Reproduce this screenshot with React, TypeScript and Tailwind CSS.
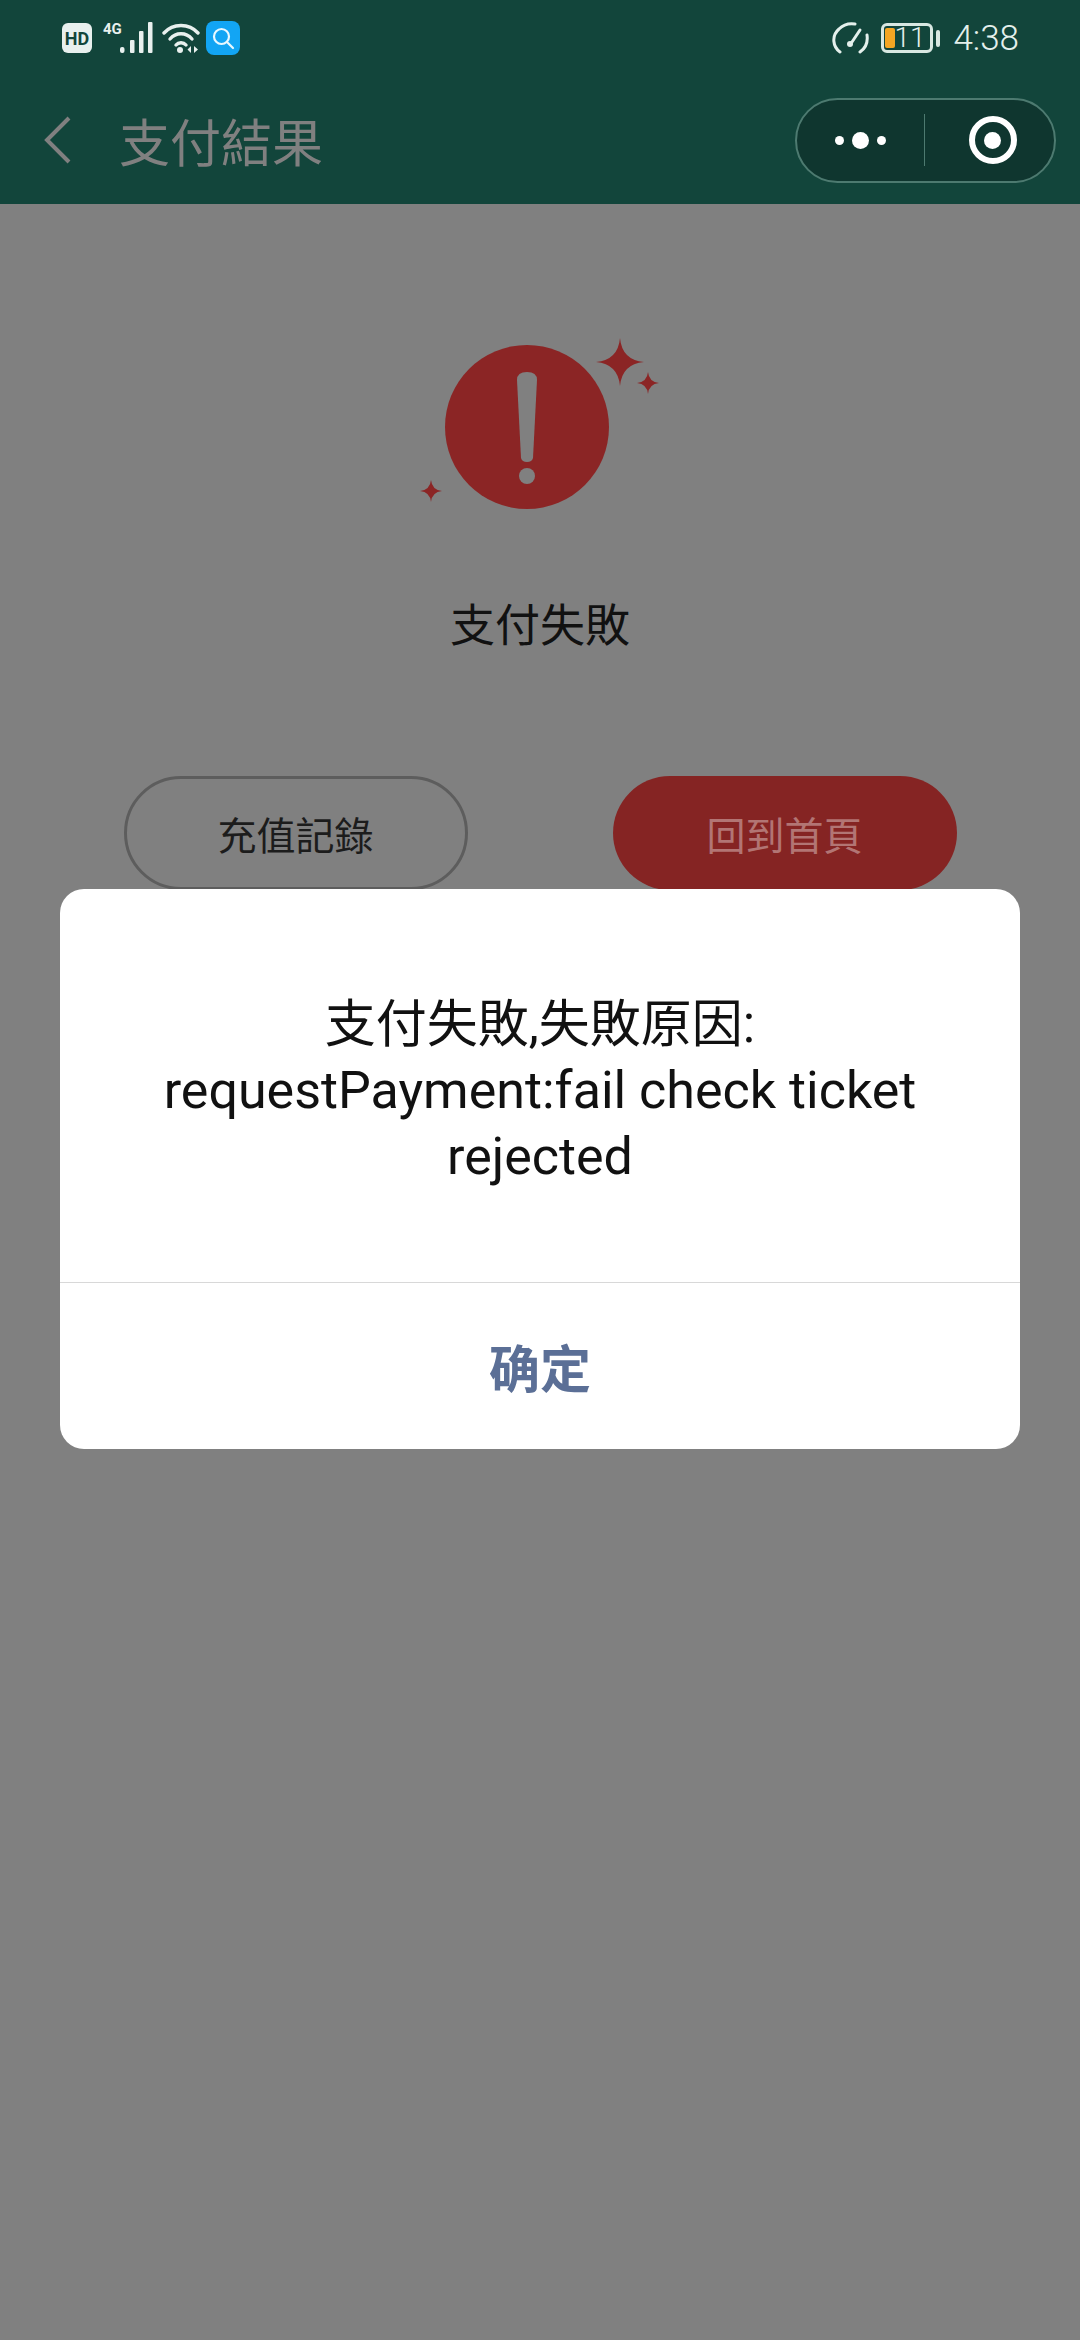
const cjk = "font-['Noto_Sans_CJK_TC','Noto_Sans_CJK_SC',sans-serif]";

function StatusLeft() {
  return (
    <div className="flex items-center">
      <div className="w-[30px] h-[30px] rounded-[6px] bg-[#e8f0ee] text-[#12453b] text-[18px] font-bold flex items-center justify-center font-['Roboto',sans-serif] ml-[62px]">
        HD
      </div>
      <svg width="52" height="34" viewBox="0 0 52 34" className="ml-[10px] text-[#e8f0ee]">
        <text x="1" y="13" fontSize="15" fontWeight="700" fill="currentColor" fontFamily="Roboto">4G</text>
        <rect x="18" y="26" width="4.500" height="6" rx="2" fill="currentColor" />
        <rect x="28" y="19" width="4.500" height="13" rx="1" fill="currentColor" />
        <rect x="37" y="10" width="4.500" height="22" rx="1" fill="currentColor" />
        <rect x="46" y="1" width="4.500" height="31" rx="1" fill="currentColor" />
      </svg>
      <svg width="38" height="32" viewBox="0 0 38 32" fill="none" stroke="#e8f0ee" strokeWidth="3.400" strokeLinecap="round" className="ml-[8px]">
        <path d="M2 11C11 1 27 1 36 11" />
        <path d="M8 17C14 10 24 10 30 17" />
        <path d="M14 23C16.500 20 21.500 20 24 23" />
        <circle cx="18" cy="28" r="3" fill="#e8f0ee" stroke="none" />
        <path d="M29 24l-3.500 3.500 3.500 3.500zM32 24l4 3.500-4 3.500z" fill="#e8f0ee" stroke="none" />
      </svg>
      <div className="w-[34px] h-[34px] ml-[6px] rounded-[8px] bg-[#12a5f4] flex items-center justify-center">
        <svg width="26" height="26" viewBox="0 0 26 26" fill="none" stroke="#e8f8ff" strokeWidth="2.200" strokeLinecap="round">
          <circle cx="11.500" cy="11.500" r="7.500" />
          <path d="M17 17l6 6" />
        </svg>
      </div>
    </div>
  );
}

function StatusRight() {
  return (
    <div className="flex items-center text-[#e4f0ec]">
      <svg width="37" height="32" viewBox="0 0 37 32" fill="none" stroke="currentColor" strokeWidth="3" strokeLinecap="round">
        <path d="M8 30C1 25 -1 14 7 7C11 3 17 1 23 2" />
        <path d="M28 30C34 26 36 20 35 13" />
        <path d="M28 8L20 20" />
        <circle cx="18" cy="22" r="3" fill="currentColor" stroke="none" />
      </svg>
      <div className="ml-[12px] w-[52px] h-[30px] rounded-[6px] border-[3px] border-[#d8e8e2] flex items-center relative">
        <div className="absolute left-[1px] top-[2px] bottom-[2px] w-[10px] rounded-[2px] bg-[#f5a623]" />
        <span className="relative ml-[10px] text-[28px] font-light font-['Roboto',sans-serif] leading-none">11</span>
      </div>
      <div className="w-[4px] h-[17px] rounded-sm bg-[#d8e8e2] ml-[3px]" />
      <span className="ml-[13px] mr-[61px] text-[35px] font-light font-['Roboto',sans-serif] leading-none">4:38</span>
    </div>
  );
}

function Capsule() {
  return (
    <div className="w-[261px] h-[85px] rounded-full bg-[#0f362f] border-2 border-[#4d7a70] flex items-center">
      <div className="flex-1 flex items-center justify-center gap-[8px]">
        <div className="w-[9px] h-[9px] rounded-full bg-white" />
        <div className="w-[17px] h-[17px] rounded-full bg-white" />
        <div className="w-[9px] h-[9px] rounded-full bg-white" />
      </div>
      <div className="w-px h-[52px] bg-[#4d7a70]" />
      <div className="w-[129px] pl-[6px] flex items-center justify-center">
        <div className="w-[48px] h-[48px] rounded-full border-[6px] border-white flex items-center justify-center">
          <div className="w-[17px] h-[17px] rounded-full bg-white" />
        </div>
      </div>
    </div>
  );
}

function FailIcon() {
  return (
    <svg width="240" height="180" viewBox="0 0 240 180" className="block">
      <circle cx="107" cy="92" r="82" fill="#8b2525" />
      <path d="M97 45Q97 37 107 37Q117 37 117 45L113 123Q112 127 107 127Q102 127 101 123Z" fill="#808080" />
      <circle cx="107" cy="141" r="8" fill="#808080" />
      <path d="M200 3Q202 25 224 27Q202 29 200 51Q198 29 176 27Q198 25 200 3Z" fill="#8b2525" />
      <path d="M228 37Q229 47 239 48Q229 49 228 59Q227 49 217 48Q227 47 228 37Z" fill="#8b2525" />
      <path d="M11 145Q12 155 22 156Q12 157 11 167Q10 157 0 156Q10 155 11 145Z" fill="#8b2525" />
    </svg>
  );
}

export default function App() {
  return (
    <div className={`relative w-[1080px] h-[2340px] bg-[#808080] overflow-hidden ${cjk}`}>
      {/* header */}
      <div className="h-[204px] bg-[#12453b] flex flex-col">
        <div className="h-[76px] flex items-center justify-between">
          <StatusLeft />
          <StatusRight />
        </div>
        <div className="flex items-center h-[128px]">
          <svg width="30" height="48" viewBox="0 0 30 48" fill="none" stroke="#808080" strokeWidth="4" className="ml-[43px]">
            <path d="M26 2L4 24L26 46" />
          </svg>
          <span className="ml-[46px] text-[51px] leading-none text-[#808080]">支付結果</span>
          <div className="ml-auto mr-[24px]">
            <Capsule />
          </div>
        </div>
      </div>

      {/* result */}
      <div className="flex flex-col items-center">
        <div className="mt-[131px]">
          <FailIcon />
        </div>
        <div className="mt-[85px] text-[45px] leading-none text-[#111]">支付失敗</div>
        <div className="mt-[131px] flex gap-[145px]">
          <div className="w-[344px] h-[114px] rounded-full border-[3px] border-[#5d5d5d] flex items-center justify-center text-[39px] text-[#1c1c1c]">
            充值記錄
          </div>
          <div className="w-[344px] h-[114px] rounded-full bg-[#852423] flex items-center justify-center text-[39px] text-[#b27574]">
            回到首頁
          </div>
        </div>
      </div>

      {/* dialog */}
      <div className="absolute left-[60px] top-[889px] w-[960px] h-[560px] rounded-[24px] bg-white flex flex-col">
        <div className="h-[393px] pt-[10px] flex flex-col items-center justify-center text-[52px] leading-[66px] text-[#111] text-center font-['Roboto','Noto_Sans_CJK_TC',sans-serif]">
          <div className="text-[51px]">支付失敗,失敗原因:</div>
          <div>requestPayment:fail check ticket</div>
          <div>rejected</div>
        </div>
        <div className="h-px bg-[#d8d8d8]" />
        <div className="flex-1 flex items-center justify-center text-[51px] font-bold text-[#5b6f96]">确定</div>
      </div>
    </div>
  );
}
